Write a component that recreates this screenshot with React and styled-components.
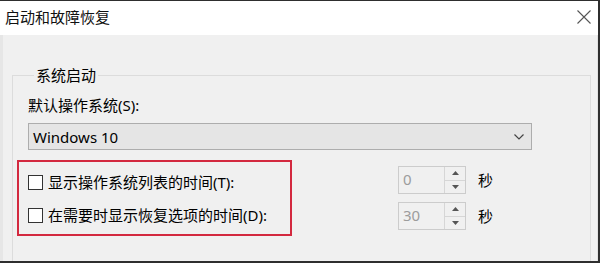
import React from 'react';
import styled, { createGlobalStyle } from 'styled-components';

const GlobalStyle = createGlobalStyle`
  html, body {
    margin: 0;
    padding: 0;
    background: #ffffff;
  }
  body {
    font-family: "Noto Sans", "Noto Sans CJK SC", sans-serif;
    font-size: 15px;
    color: #000;
  }
`;

const Frame = styled.div`
  width: 600px;
  height: 263px;
  box-sizing: border-box;
  border-top: 1px solid #2e2e2e;
  border-right: 2px solid #2e2e2e;
  border-bottom: 2px solid #2e2e2e;
  overflow: hidden;
  display: flex;
  flex-direction: column;
`;

const TitleBar = styled.div`
  height: 32px;
  flex-shrink: 0;
  background: #ffffff;
  display: flex;
  align-items: center;
  justify-content: space-between;
  padding: 0 6px 2px 5px;
`;

const Title = styled.span`
  font-size: 15px;
  line-height: 20px;
  color: #111;
`;

const CloseButton = styled.div`
  width: 16px;
  height: 16px;
  display: flex;
  align-items: center;
  justify-content: center;
`;

const Body = styled.div`
  flex: 1;
  min-height: 0;
  background: #f0f0f0;
  border-left: 3px solid #e6e6e6;
  border-right: 1px solid #e2e2e2;
  padding: 30px 6px 0 9px;
`;

const Group = styled.fieldset`
  margin: 0;
  padding: 0 0 60px 15px;
  border: 1px solid #dcdcdc;
  min-width: 0;
`;

const Legend = styled.legend`
  margin-left: 6px;
  padding: 0 2px;
  font-size: 15px;
  line-height: 20px;
`;

const FieldLabel = styled.div`
  margin-top: 10px;
  line-height: 20px;
`;

const Select = styled.div`
  margin-top: 8px;
  width: 504px;
  height: 27px;
  box-sizing: border-box;
  background: #e5e5e5;
  border: 1px solid #adadad;
  display: flex;
  align-items: center;
  justify-content: space-between;
  padding: 0 7px 0 4px;
  line-height: 20px;
`;

const OptionsRow = styled.div`
  margin-top: 10px;
  display: flex;
  align-items: center;
`;

const Highlight = styled.div`
  margin-left: -11px;
  width: 275px;
  box-sizing: border-box;
  border: 2px solid #d3293f;
  padding: 7px 0 6px 9px;
  display: flex;
  flex-direction: column;
  gap: 7px;
`;

const CheckRow = styled.label`
  height: 26px;
  display: flex;
  align-items: center;
  gap: 5px;
  line-height: 20px;
`;

const Box = styled.span`
  width: 13px;
  height: 13px;
  border: 1px solid #333;
  background: #fff;
  flex-shrink: 0;
`;

const Spinners = styled.div`
  margin-left: 106px;
  display: flex;
  flex-direction: column;
  gap: 8px;
`;

const SpinRow = styled.div`
  display: flex;
  align-items: center;
  gap: 12px;
`;

const Spinner = styled.div`
  width: 68px;
  height: 28px;
  box-sizing: border-box;
  border: 1px solid #cccccc;
  display: flex;
`;

const SpinValue = styled.div`
  flex: 1;
  padding-left: 4px;
  color: #9c9c9c;
  line-height: 24px;
  font-size: 15px;
`;

const Arrows = styled.div`
  width: 20px;
  display: flex;
  flex-direction: column;
  border-left: 1px solid #d6d6d6;
`;

const ArrowButton = styled.div`
  flex: 1;
  display: flex;
  align-items: center;
  justify-content: center;
  border-top: ${(p) => (p.$down ? '1px solid #d6d6d6' : 'none')};
`;

const Unit = styled.span`
  line-height: 20px;
`;

const Triangle = ({ down }) => (
  <svg width="7" height="4" viewBox="0 0 7 4">
    <path d={down ? 'M0 0H7L3.5 4Z' : 'M0 4H7L3.5 0Z'} fill="#555" />
  </svg>
);

const NumberBox = ({ value }) => (
  <SpinRow>
    <Spinner>
      <SpinValue>{value}</SpinValue>
      <Arrows>
        <ArrowButton>
          <Triangle />
        </ArrowButton>
        <ArrowButton $down>
          <Triangle down />
        </ArrowButton>
      </Arrows>
    </Spinner>
    <Unit>秒</Unit>
  </SpinRow>
);

export default function App() {
  return (
    <>
      <GlobalStyle />
      <Frame>
        <TitleBar>
          <Title>启动和故障恢复</Title>
          <CloseButton>
            <svg width="14" height="14" viewBox="0 0 14 14">
              <path d="M0.5 0.5L13.5 13.5M13.5 0.5L0.5 13.5" stroke="#555" strokeWidth="1.1" />
            </svg>
          </CloseButton>
        </TitleBar>
        <Body>
          <Group>
            <Legend>系统启动</Legend>
            <FieldLabel>默认操作系统(S):</FieldLabel>
            <Select>
              <span>Windows 10</span>
              <svg width="10" height="6" viewBox="0 0 10 6">
                <path d="M0.5 0.5L5 5L9.5 0.5" stroke="#444" strokeWidth="1.2" fill="none" />
              </svg>
            </Select>
            <OptionsRow>
              <Highlight>
                <CheckRow>
                  <Box />
                  显示操作系统列表的时间(T):
                </CheckRow>
                <CheckRow>
                  <Box />
                  在需要时显示恢复选项的时间(D):
                </CheckRow>
              </Highlight>
              <Spinners>
                <NumberBox value="0" />
                <NumberBox value="30" />
              </Spinners>
            </OptionsRow>
          </Group>
        </Body>
      </Frame>
    </>
  );
}
